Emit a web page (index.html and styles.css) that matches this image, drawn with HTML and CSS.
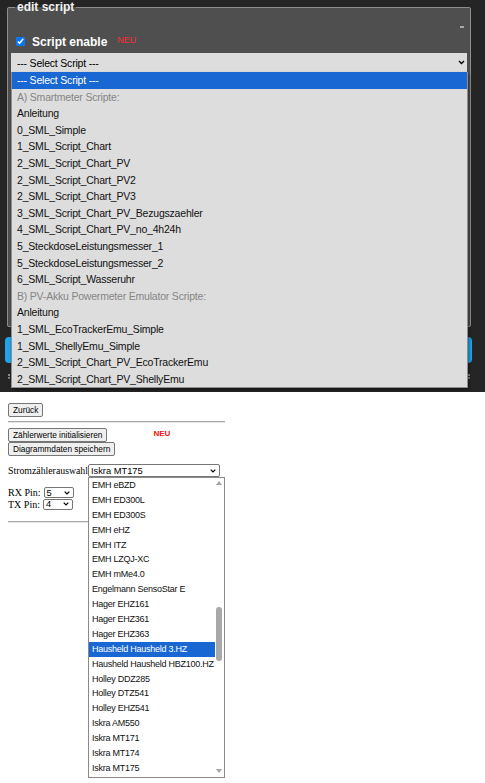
FILE: index.html
```html
<!DOCTYPE html>
<html lang="de">
<head>
  <meta charset="UTF-8" />
  <meta name="viewport" content="width=device-width, initial-scale=1.0"/>
  <title>Scripts</title>
  <link rel="stylesheet" href="styles.css">
</head>
<body>

<!-- Tasmota: edit script -->
<div class="tasmota">
  <fieldset class="edit">
    <legend>edit script</legend>
    <span class="dash"></span>
    <label class="enable">
      <input type="checkbox" checked>
      <span>Script enable</span>
      <span class="neu">NEU</span>
    </label>
    <div class="pick">
      <span>--- Select Script ---</span>
      <svg width="7" height="5" viewBox="0 0 7 5"><path d="M1 1 3.5 3.5 6 1" fill="none" stroke="#000" stroke-width="1.4"/></svg>

      <!-- open dropdown -->
      <ul class="drop">
        <li class="sel">--- Select Script ---</li>
        <li class="grp">A) Smartmeter Scripte:</li>
        <li>Anleitung</li>
        <li>0_SML_Simple</li>
        <li>1_SML_Script_Chart</li>
        <li>2_SML_Script_Chart_PV</li>
        <li>2_SML_Script_Chart_PV2</li>
        <li>2_SML_Script_Chart_PV3</li>
        <li>3_SML_Script_Chart_PV_Bezugszaehler</li>
        <li>4_SML_Script_Chart_PV_no_4h24h</li>
        <li>5_SteckdoseLeistungsmesser_1</li>
        <li>5_SteckdoseLeistungsmesser_2</li>
        <li>6_SML_Script_Wasseruhr</li>
        <li class="grp">B) PV-Akku Powermeter Emulator Scripte:</li>
        <li>Anleitung</li>
        <li>1_SML_EcoTrackerEmu_Simple</li>
        <li>1_SML_ShellyEmu_Simple</li>
        <li>2_SML_Script_Chart_PV_EcoTrackerEmu</li>
        <li>2_SML_Script_Chart_PV_ShellyEmu</li>
      </ul>
    </div>
  </fieldset>
  <div class="run-btn"></div>
  <div class="tail"><span></span><span></span></div>
</div>

<!-- SML page -->
<div class="sml">
  <button class="btn">Zurück</button>
  <hr>
  <div class="btn-row">
    <button class="btn">Zählerwerte initialisieren</button>
    <span class="neu-red">NEU</span>
  </div>
  <button class="btn">Diagrammdaten speichern</button>

  <div class="meter">
    <span>Stromzählerauswahl</span>
    <div class="box meter-box">
      <span>Iskra MT175</span>
      <svg width="6" height="4" viewBox="0 0 6 4"><path d="M.7.7 3 3 5.3.7" fill="none" stroke="#000" stroke-width="1.2"/></svg>

      <div class="meter-list">
        <ul>
          <li>EMH eBZD</li>
          <li>EMH ED300L</li>
          <li>EMH ED300S</li>
          <li>EMH eHZ</li>
          <li>EMH ITZ</li>
          <li>EMH LZQJ-XC</li>
          <li>EMH mMe4.0</li>
          <li>Engelmann SensoStar E</li>
          <li>Hager EHZ161</li>
          <li>Hager EHZ361</li>
          <li>Hager EHZ363</li>
          <li class="sel">Hausheld Hausheld 3.HZ</li>
          <li>Hausheld Hausheld HBZ100.HZ</li>
          <li>Holley DDZ285</li>
          <li>Holley DTZ541</li>
          <li>Holley EHZ541</li>
          <li>Iskra AM550</li>
          <li>Iskra MT171</li>
          <li>Iskra MT174</li>
          <li>Iskra MT175</li>
        </ul>
        <div class="scroll">
          <span class="arr-up"></span>
          <span class="thumb"></span>
          <span class="arr-down"></span>
        </div>
      </div>
    </div>
  </div>

  <div class="pin">
    <span>RX Pin:</span>
    <div class="box pin-box"><span>5</span><svg width="6" height="4" viewBox="0 0 6 4"><path d="M.7.7 3 3 5.3.7" fill="none" stroke="#000" stroke-width="1.2"/></svg></div>
  </div>
  <div class="pin">
    <span>TX Pin:</span>
    <div class="box pin-box"><span>4</span><svg width="6" height="4" viewBox="0 0 6 4"><path d="M.7.7 3 3 5.3.7" fill="none" stroke="#000" stroke-width="1.2"/></svg></div>
  </div>
  <hr class="last">
</div>

</body>
</html>
```

FILE: styles.css
```css
* {
  box-sizing: border-box;
}

body {
  margin: 0;
  background: #fff;
  font-family: "Liberation Sans", Arial, sans-serif;
}

ul {
  margin: 0;
  padding: 0;
  list-style: none;
}

/* ---- dark tasmota part ---- */

.tasmota {
  height: 392px;
  background: #252525;
  color: #eaeaea;
  overflow: hidden;
}

.edit {
  margin: 0 14px 0 7px;
  padding: 0 3px;
  height: 327px;
  min-width: 0;
  border: 1px solid #8e8e8e;
  border-radius: 2px;
  background: #4f4f4f;
}

.edit legend {
  margin-left: 4px;
  padding: 0 2px;
  font-size: 12px;
  font-weight: 700;
  line-height: 14px;
  color: #f2f2f2;
}

.dash {
  display: block;
  width: 4px;
  height: 2px;
  margin: 12px 3px 0 auto;
  background: #a8a8a8;
}

.enable {
  display: flex;
  align-items: center;
  height: 11px;
  margin-top: 8px;
  font-size: 12px;
  font-weight: 700;
  color: #fff;
}

.enable input {
  width: 9px;
  height: 9px;
  margin: 0 7px 0 5px;
  accent-color: #0075ff;
}

.enable .neu {
  margin-left: 10px;
  font-size: 9px;
  font-weight: 400;
  color: #ff2a35;
  position: relative;
  top: -2px;
}

.pick {
  position: relative;
  display: flex;
  align-items: center;
  justify-content: space-between;
  height: 19px;
  margin-top: 6px;
  padding: 0 2px 0 6px;
  background: #dddddd;
  color: #000;
  font-size: 10.5px;
  letter-spacing: -0.2px;
}

.drop {
  position: absolute;
  top: 100%;
  left: 0;
  right: -1px;
  background: #dddddd;
  border: 1px solid #8f8f8f;
  border-top: none;
  box-shadow: 1px 2px 3px rgba(0, 0, 0, 0.45);
  z-index: 10;
}

.drop li {
  height: 16.6px;
  line-height: 16.6px;
  padding-left: 5px;
  white-space: nowrap;
  color: #111;
}

.drop li.sel {
  background: #1967d2;
  color: #fff;
}

.drop li.grp {
  color: #858585;
}

.run-btn {
  height: 26px;
  margin: 10px 13px 0 5px;
  border-radius: 4px;
  background: #1fa3ec;
}

.tail {
  display: flex;
  justify-content: space-between;
  margin: 11px 15px 0 8px;
}

.tail span {
  width: 2px;
  height: 5px;
  border-left: 2px dotted #8a8a8a;
}

/* ---- SML page ---- */

.sml {
  width: 233px;
  min-height: 391px;
  padding: 11px 8px 0;
  font-family: "Liberation Serif", "Times New Roman", serif;
  font-size: 10px;
  color: #000;
}

.btn {
  display: block;
  height: 14px;
  margin: 0;
  padding: 0 4px;
  font-family: "Liberation Sans", Arial, sans-serif;
  font-size: 8.3px;
  line-height: 12px;
  color: #000;
  background: #efefef;
  border: 1px solid #767676;
  border-radius: 2px;
}

.sml hr {
  height: 0;
  margin: 4px 0 5px;
  border: 0;
  border-top: 1px solid #a8a8a8;
  border-bottom: 1px solid #e6e6e6;
}

.btn-row {
  display: flex;
  align-items: flex-start;
}

.neu-red {
  margin: 1px 0 0 46px;
  font-family: "Liberation Sans", Arial, sans-serif;
  font-size: 8px;
  font-weight: 700;
  color: #ee1111;
}

.meter {
  display: flex;
  align-items: center;
  margin-top: 8px;
}

.meter > span {
  font-size: 9.8px;
}

.box {
  position: relative;
  display: flex;
  align-items: center;
  justify-content: space-between;
  padding: 0 3px 0 2px;
  background: #fff;
  border: 1px solid #767676;
  border-radius: 2px;
  font-family: "Liberation Sans", Arial, sans-serif;
  font-size: 9.3px;
}

.meter-box {
  width: 132px;
  height: 13px;
}

.meter-list {
  position: absolute;
  top: 12px;
  left: -1px;
  width: 137px;
  height: 301px;
  background: #fff;
  border: 1px solid #8a8a8a;
  overflow: hidden;
  z-index: 10;
}

.meter-list ul {
  margin-right: 9px;
}

.meter-list li {
  height: 14.9px;
  line-height: 14.9px;
  padding-left: 3px;
  font-size: 9px;
  letter-spacing: -0.25px;
  white-space: nowrap;
  color: #111;
}

.meter-list li.sel {
  background: #1967d2;
  color: #fff;
}

.scroll {
  position: absolute;
  top: 0;
  right: 0;
  bottom: 0;
  width: 9px;
  background: #fff;
}

.arr-up, .arr-down, .thumb {
  position: absolute;
  left: 50%;
  transform: translateX(-50%);
}

.arr-up {
  top: 3px;
  border-left: 3px solid transparent;
  border-right: 3px solid transparent;
  border-bottom: 4px solid #a3a3a3;
}

.arr-down {
  bottom: 4px;
  border-left: 3px solid transparent;
  border-right: 3px solid transparent;
  border-top: 4px solid #a3a3a3;
}

.thumb {
  top: 129px;
  width: 6px;
  height: 54px;
  border-radius: 3px;
  background: #a8a8a8;
}

.pin {
  display: flex;
  align-items: center;
  height: 11.5px;
  gap: 3px;
}

.meter + .pin {
  margin-top: 10px;
}

.pin-box {
  width: 30px;
  height: 11px;
}

.sml hr.last {
  margin-top: 11px;
}
```
